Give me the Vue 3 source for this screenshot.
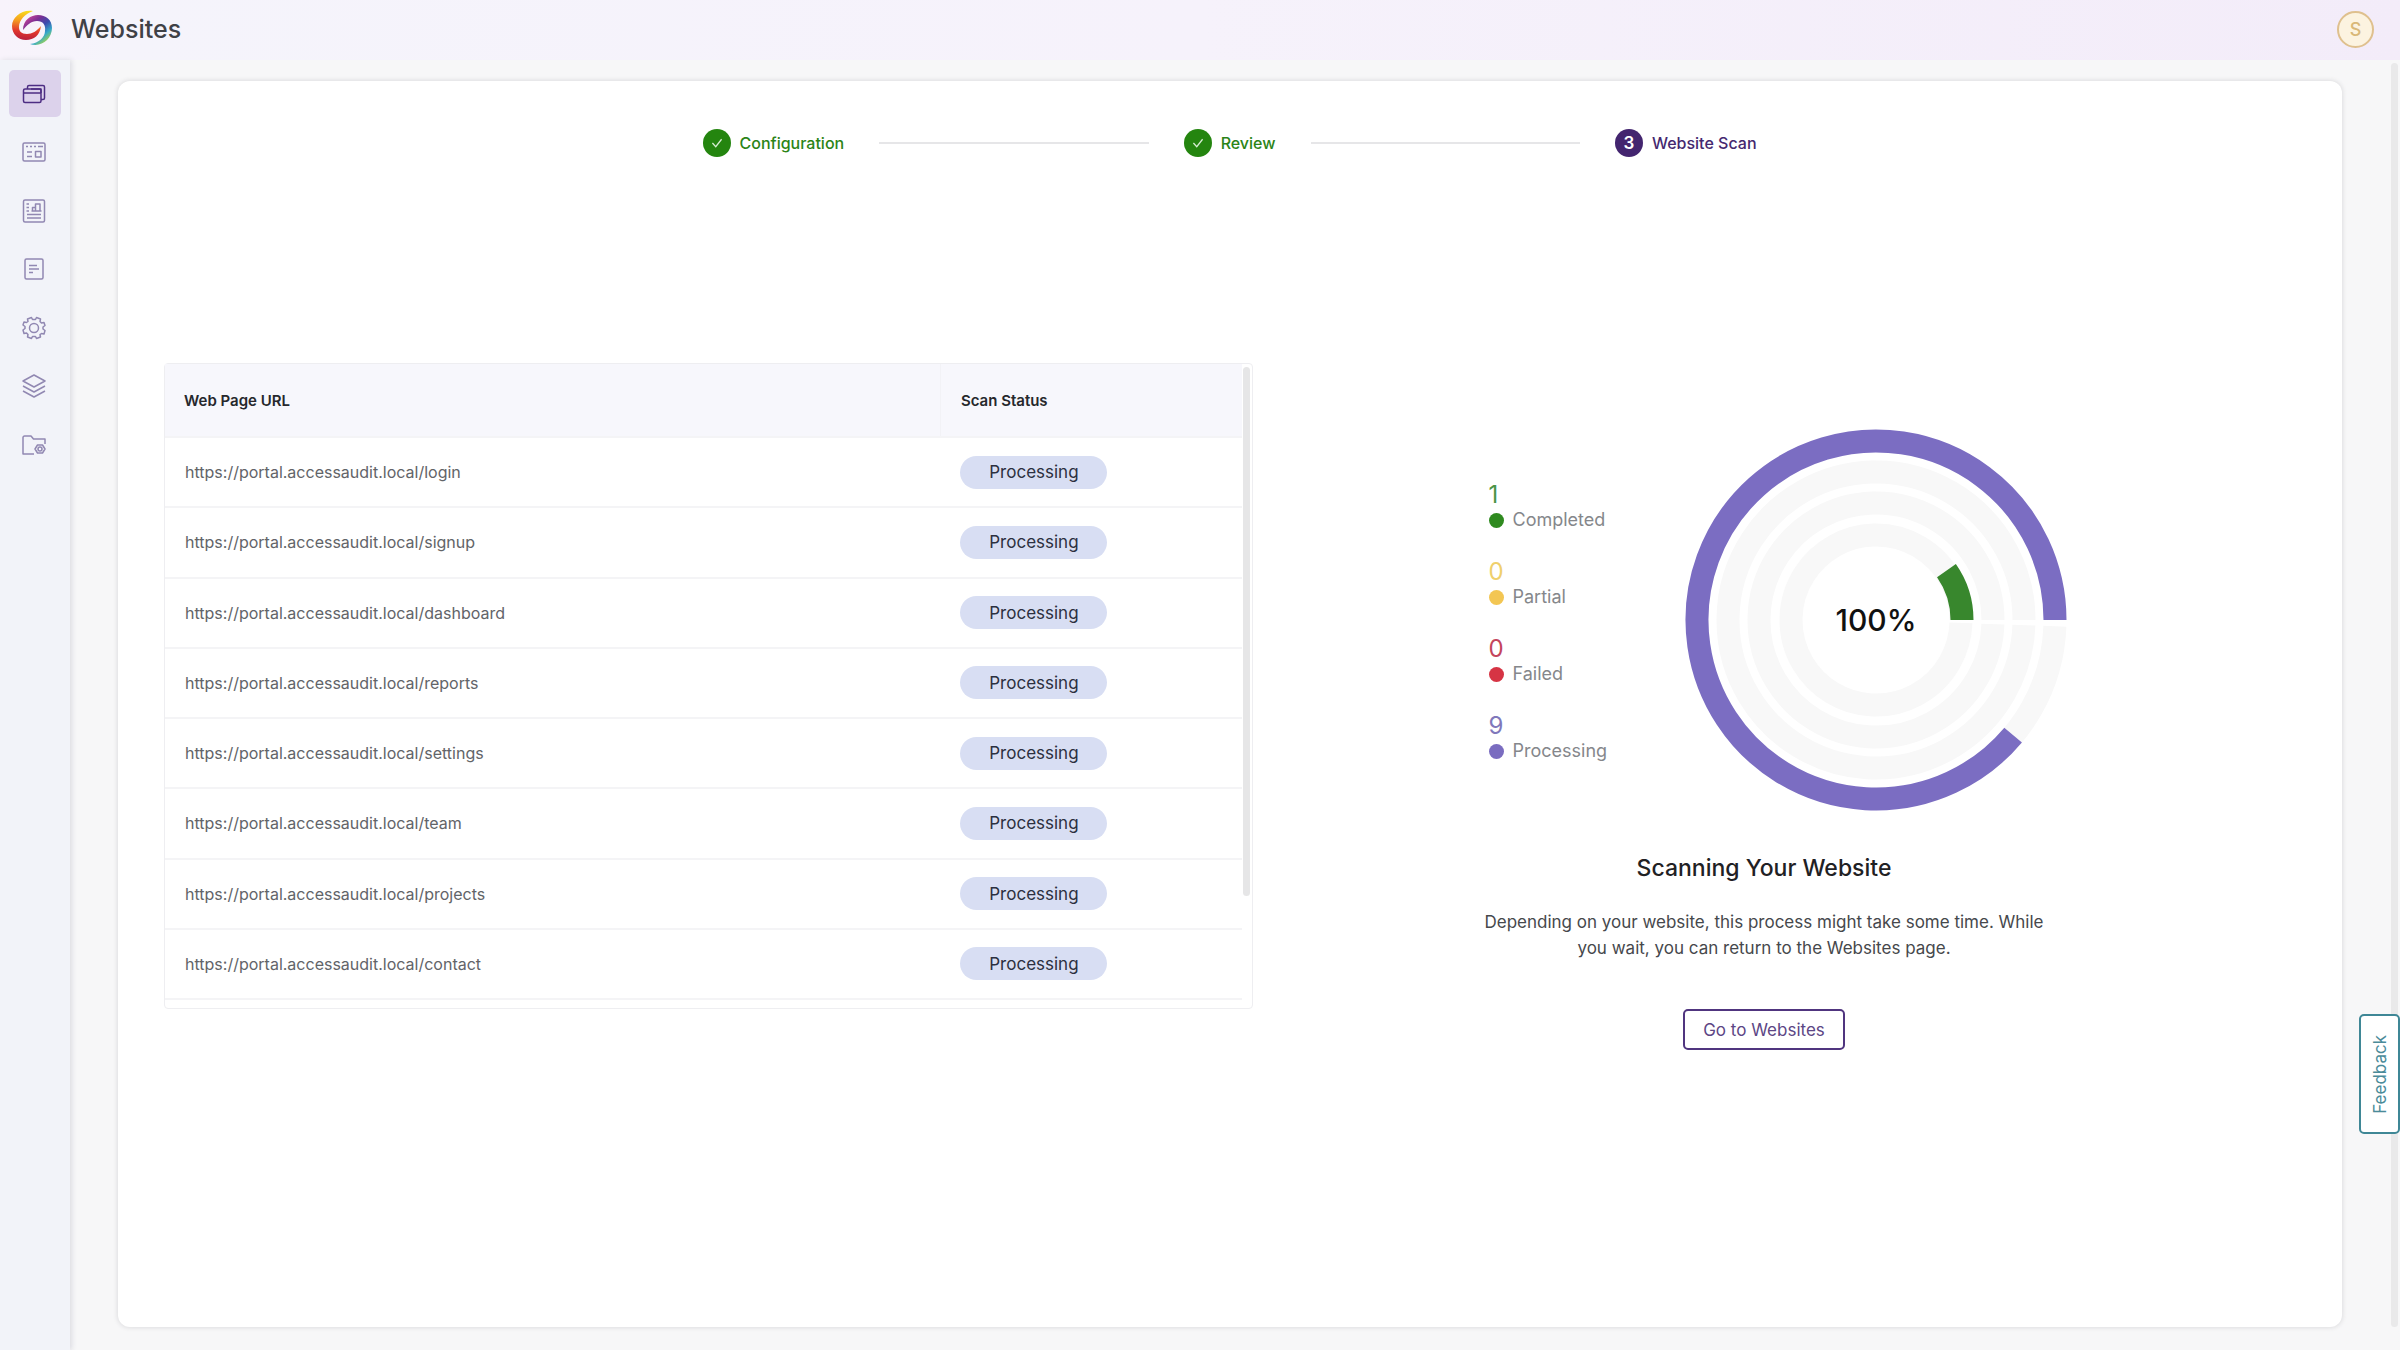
<script setup>
const pages = ['login', 'signup', 'dashboard', 'reports', 'settings', 'team', 'projects', 'contact']
  .map((slug) => ({ url: `https://portal.accessaudit.local/${slug}`, status: 'Processing' }))

const legend = [
  { label: 'Completed', count: 1, tone: 'green' },
  { label: 'Partial', count: 0, tone: 'yellow' },
  { label: 'Failed', count: 0, tone: 'red' },
  { label: 'Processing', count: 9, tone: 'purple' },
]

const nav = ['windows', 'browser', 'report', 'document', 'settings', 'layers', 'folder']

// Ring arcs start at three o'clock and run anticlockwise.
const C = 191
function arc(radius, from, to) {
  const point = (deg) => {
    const a = (deg * Math.PI) / 180
    return `${(C + radius * Math.cos(a)).toFixed(2)} ${(C - radius * Math.sin(a)).toFixed(2)}`
  }
  const large = to - from > 180 ? 1 : 0
  return `M${point(from)}A${radius} ${radius} 0 ${large} 0 ${point(to)}`
}
const tracks = [85, 117, 148, 179].map((r) => arc(r, 0, 358))
</script>

<template>
  <div class="app">
    <header class="topbar">
      <svg class="logo" viewBox="0 0 42 38" aria-hidden="true">
        <defs>
          <linearGradient id="warm" x1="0.6" y1="0" x2="0.5" y2="1">
            <stop offset="0" stop-color="#f8e01c" />
            <stop offset="0.35" stop-color="#f5a01f" />
            <stop offset="0.7" stop-color="#e2382c" />
            <stop offset="1" stop-color="#b81f3c" />
          </linearGradient>
          <linearGradient id="cool" x1="0" y1="0.1" x2="0.7" y2="1">
            <stop offset="0" stop-color="#d8489a" />
            <stop offset="0.3" stop-color="#7b2f93" />
            <stop offset="0.55" stop-color="#3a4cae" />
            <stop offset="0.78" stop-color="#35a9c9" />
            <stop offset="1" stop-color="#a5d64b" />
          </linearGradient>
        </defs>
        <path fill="url(#warm)" d="M22 1C11-1 1 7 1 16c0 8 6 14 14 14 8 0 14-5 15-14-4 5-9 8-14 8-6 0-8-3-8-7C8 10 14 4 22 1Z" />
        <path fill="url(#cool)" d="M12 20C12 10 20 5 27 5c8 0 14 5 14 13 0 11-11 20-22 16 9-1 15-7 15-13 1-6-2-10-8-10-6 0-10 4-14 9Z" />
      </svg>
      <h1>Websites</h1>
      <button class="avatar" type="button" aria-label="S">S</button>
    </header>

    <div class="body">
      <nav class="sidebar">
        <div class="nav-list">
          <a v-for="(name, i) in nav" :key="name" href="#" class="nav-item" :class="{ active: i === 0 }" :aria-label="name">
            <svg viewBox="0 0 24 24" aria-hidden="true">
              <g v-if="name === 'windows'">
                <rect x="1.500" y="7" width="17.500" height="13.500" rx="1.500" />
                <path d="M2 11h17M5.500 7V5A1.500 1.500 0 0 1 7 3.500H21A1.500 1.500 0 0 1 22.500 5v11a1.500 1.500 0 0 1-1.500 1.500h-2M9 7h10v4" />
              </g>
              <g v-else-if="name === 'browser'">
                <rect x="1" y="3" width="22" height="18" rx="1.500" />
                <path d="M4 6.500h2M8 6.500h2M12 6.500h2M16 6.500h5M5 12h5M5 16.500h5" />
                <rect x="13.500" y="11.500" width="5.500" height="5.500" />
              </g>
              <g v-else-if="name === 'report'">
                <rect x="1.500" y="1" width="21" height="22" rx="1.500" />
                <path d="M4.500 5h2.500M4.500 8.500h2.500M4.500 12h2.500M9.500 12h10M10.500 12V8.500h3V12M13.500 8.500V5H18v7M5 15.500h14M5 19h14" />
              </g>
              <g v-else-if="name === 'document'">
                <rect x="3" y="2" width="18" height="20" rx="1.500" />
                <path d="M7 8.500h8M7 12h10M7 15.500h4" />
              </g>
              <g v-else-if="name === 'settings'">
                <path d="M9.500 1.500 10.500 3.500h3l1-2 4 1.500-.500 2.500 1.500 1.500 2.500-.500 1 3-2 1.500v2l2 1.500-1 3.500-2.500-.500L18 18.500l.500 2.500-4 1.500-1-2h-3l-1 2-4-1.500.500-2.500L4.500 17 2 17.500 1 14l2-1.500v-2L1 9l1-3 2.500.500L6 5.500 5.500 3Z" />
                <circle cx="12" cy="12" r="4.500" />
              </g>
              <g v-else-if="name === 'layers'">
                <path d="m12 1 11 6-11 6L1 7ZM1 12l11 6 11-6M1 17l11 6 11-6" />
              </g>
              <g v-else>
                <path d="M12 21H1V4.500A1.500 1.500 0 0 1 2.500 3H9l2.500 3H23v5" />
                <path d="M15.500 12h5l2.500 4-2.500 4h-5L13 16Z" />
                <circle cx="18" cy="16" r="2" />
              </g>
            </svg>
          </a>
        </div>
      </nav>

      <main class="main">
        <section class="card">
          <ol class="stepper">
            <li class="step done">
              <span class="bullet"><svg viewBox="0 0 14 12"><path d="m1.500 6 4 4.500 7-9" /></svg></span>
              Configuration
            </li>
            <li class="line" aria-hidden="true"></li>
            <li class="step done">
              <span class="bullet"><svg viewBox="0 0 14 12"><path d="m1.500 6 4 4.500 7-9" /></svg></span>
              Review
            </li>
            <li class="line" aria-hidden="true"></li>
            <li class="step current"><span class="bullet">3</span>Website Scan</li>
          </ol>

          <div class="columns">
            <div class="table-box">
              <table>
                <thead>
                  <tr><th class="col-url">Web Page URL</th><th>Scan Status</th></tr>
                </thead>
                <tbody>
                  <tr v-for="page in pages" :key="page.url">
                    <td>{{ page.url }}</td>
                    <td><span class="pill">{{ page.status }}</span></td>
                  </tr>
                </tbody>
              </table>
              <div class="thumb"></div>
            </div>

            <div class="progress">
              <div class="chart-row">
                <ul class="legend">
                  <li v-for="item in legend" :key="item.label" :class="item.tone">
                    <span class="count">{{ item.count }}</span>
                    <span class="label"><i class="dot"></i>{{ item.label }}</span>
                  </li>
                </ul>
                <svg class="donut" viewBox="0 0 382 382">
                  <path v-for="d in tracks" :key="d" :d="d" class="track" />
                  <path :d="arc(179, 0, 320)" class="gap-ring" />
                  <path :d="arc(179, 0, 320)" class="arc-processing" />
                  <path :d="arc(86, 0, 35)" class="arc-completed" />
                  <text :x="C" :y="C + 11" text-anchor="middle">100%</text>
                </svg>
              </div>
              <h2>Scanning Your Website</h2>
              <p>Depending on your website, this process might take some time. While you wait, you can return to the Websites page.</p>
              <button class="outline" type="button">Go to Websites</button>
            </div>
          </div>
        </section>
        <div class="page-scroll"></div>
      </main>
    </div>
    <button class="feedback" type="button">Feedback</button>
  </div>
</template>

<style>
body {
  margin: 0;
}
</style>

<style scoped>
.app {
  display: flex;
  flex-direction: column;
  min-height: 100vh;
  position: relative;
  font-family: Inter, "Liberation Sans", sans-serif;
  font-size: 17px;
  color: #26282c;
  background: #f7f7f8;
}
.app * {
  box-sizing: border-box;
}
button {
  font-family: inherit;
  cursor: pointer;
}
.topbar {
  display: flex;
  align-items: center;
  height: 60px;
  padding: 0 26px 2px 11px;
  background: linear-gradient(90deg, #f8f3fb 0, #f5f4fb 5%, #f6f2fb 50%, #f3ecf9 100%);
}
.logo {
  width: 42px;
  height: 38px;
}
h1 {
  margin: 0 auto 0 18px;
  font-size: 25px;
  font-weight: 500;
  color: #3f4146;
}
.avatar {
  width: 37px;
  height: 37px;
  padding: 0;
  border: 2px solid #dfc08e;
  border-radius: 50%;
  background: #fcf3e0;
  color: #d9b878;
  font-size: 18px;
  font-weight: 500;
}
.body {
  display: flex;
  flex: 1;
}
.sidebar {
  width: 70px;
  padding: 10px 9px;
  background: #f2f3f9;
  box-shadow: 2px 0 5px #dcdce2;
}
.nav-list {
  display: flex;
  flex-direction: column;
  justify-content: space-between;
  height: 398px;
}
.nav-item {
  display: flex;
  align-items: center;
  justify-content: center;
  width: 52px;
  height: 47px;
  border-radius: 5px;
  color: #9188b2;
}
.nav-item.active {
  background: #dcd2eb;
  color: #4d2e83;
}
.nav-item svg {
  width: 24px;
  height: 24px;
  margin-right: 2px;
  fill: none;
  stroke: currentColor;
  stroke-width: 1.5;
  stroke-linejoin: round;
}
.main {
  display: flex;
  flex: 1;
  padding: 21px 2px 23px 48px;
}
.card {
  flex: 1;
  padding: 44px 67px 40px 46px;
  background: #fff;
  border-radius: 12px;
  box-shadow: 0 0 4px 1px #dedee0;
}
.page-scroll {
  width: 7px;
  margin: -18px 0 0 49px;
  border-radius: 4px;
  background: #e9e9ea;
}
.stepper {
  display: flex;
  align-items: center;
  gap: 35px;
  max-width: 1054px;
  margin: 0 auto;
  padding: 0 0 0 20px;
  box-sizing: content-box !important;
  list-style: none;
  font-size: 16px;
  font-weight: 500;
  line-height: 36px;
}
.step {
  display: flex;
  align-items: center;
  gap: 9px;
}
.bullet {
  display: flex;
  align-items: center;
  justify-content: center;
  width: 28px;
  height: 28px;
  border-radius: 50%;
  color: #fff;
}
.bullet svg {
  width: 12px;
  height: 10px;
  fill: none;
  stroke: #d6ecd2;
  stroke-width: 1.5;
}
.done {
  color: #2b8417;
}
.done .bullet {
  background: #24850f;
}
.current {
  color: #45286f;
}
.current .bullet {
  background: #43256f;
  font-size: 17px;
  font-weight: 600;
}
.line {
  flex: 1;
  height: 2px;
  background: #e6e6e8;
}
.columns {
  display: grid;
  grid-template-columns: 1089fr 1022fr;
  align-items: start;
  margin-top: 202px;
}
.table-box {
  position: relative;
  padding: 0 10px 8px 0;
  border: 1px solid #eeeef1;
  border-radius: 4px;
}
table {
  width: 100%;
  height: 636px;
  border-collapse: collapse;
  table-layout: fixed;
}
th,
td {
  padding: 0 20px;
  text-align: left;
  border-bottom: 2px solid #f4f4f6;
}
th {
  height: 73px;
  padding-left: 19px;
  background: #f7f7fc;
  color: #26282c;
  font-size: 15px;
  font-weight: 600;
}
th + th,
td + td {
  padding-left: 20px;
}
.col-url {
  width: 72%;
  border-right: 1px solid #f2f2f6;
}
td {
  color: #626468;
  font-size: 16px;
  font-optical-sizing: none;
}
.pill {
  display: inline-flex;
  align-items: center;
  justify-content: center;
  width: 147px;
  height: 33px;
  border-radius: 17px;
  background: #d8def3;
  color: #2c3040;
  font-size: 17px;
}
.thumb {
  position: absolute;
  top: 3px;
  right: 2px;
  width: 7px;
  height: 529px;
  border-radius: 4px;
  background: #e6e6e7;
}
.progress {
  display: flex;
  flex-direction: column;
  align-items: center;
  padding-top: 66px;
}
.chart-row {
  display: flex;
  padding-left: 27px;
}
.legend {
  display: flex;
  flex-direction: column;
  gap: 27px;
  width: 196px;
  margin: 0;
  padding: 52px 0 0;
  list-style: none;
  color: #85878b;
}
.legend li {
  display: flex;
  flex-direction: column;
}
.count {
  font-size: 24px;
  line-height: 28px;
}
.label {
  display: flex;
  align-items: center;
  gap: 9px;
  font-size: 18px;
  line-height: 22px;
}
.dot {
  width: 15px;
  height: 15px;
  border-radius: 50%;
}
.green .count { color: #4c9447; }
.green .dot { background: #2f8a1f; }
.yellow .count { color: #efd06d; }
.yellow .dot { background: #f3c653; }
.red .count { color: #c4455c; }
.red .dot { background: #d63444; }
.purple .count { color: #8078bb; }
.purple .dot { background: #7a6cc0; }
.donut {
  width: 382px;
  height: 382px;
  fill: none;
}
.track {
  stroke: #f8f8f8;
  stroke-width: 23;
}
.gap-ring {
  stroke: #fff;
  stroke-width: 26;
}
.arc-processing {
  stroke: #7b6dc2;
  stroke-width: 23;
}
.arc-completed {
  stroke: #38872d;
  stroke-width: 23;
}
.donut text {
  fill: #111;
  font-size: 30px;
  font-weight: 500;
}
h2 {
  margin: 42px 0 26px;
  font-size: 23px;
  font-weight: 500;
  line-height: 30px;
  color: #1f2124;
}
p {
  max-width: 590px;
  margin: 0 0 48px;
  text-align: center;
  font-size: 17px;
  font-optical-sizing: none;
  line-height: 26px;
  color: #46484c;
}
.outline {
  height: 41px;
  padding: 0 18px;
  border: 2px solid #50357f;
  border-radius: 5px;
  background: #fff;
  color: #5c4685;
  font-size: 17px;
  font-optical-sizing: none;
}
.feedback {
  position: absolute;
  right: 0;
  top: 1014px;
  width: 41px;
  height: 120px;
  padding: 0;
  border: 2px solid #3f8796;
  border-radius: 5px;
  background: #fff;
  color: #4b8b99;
  font-size: 17px;
  writing-mode: sideways-lr;
}
</style>
